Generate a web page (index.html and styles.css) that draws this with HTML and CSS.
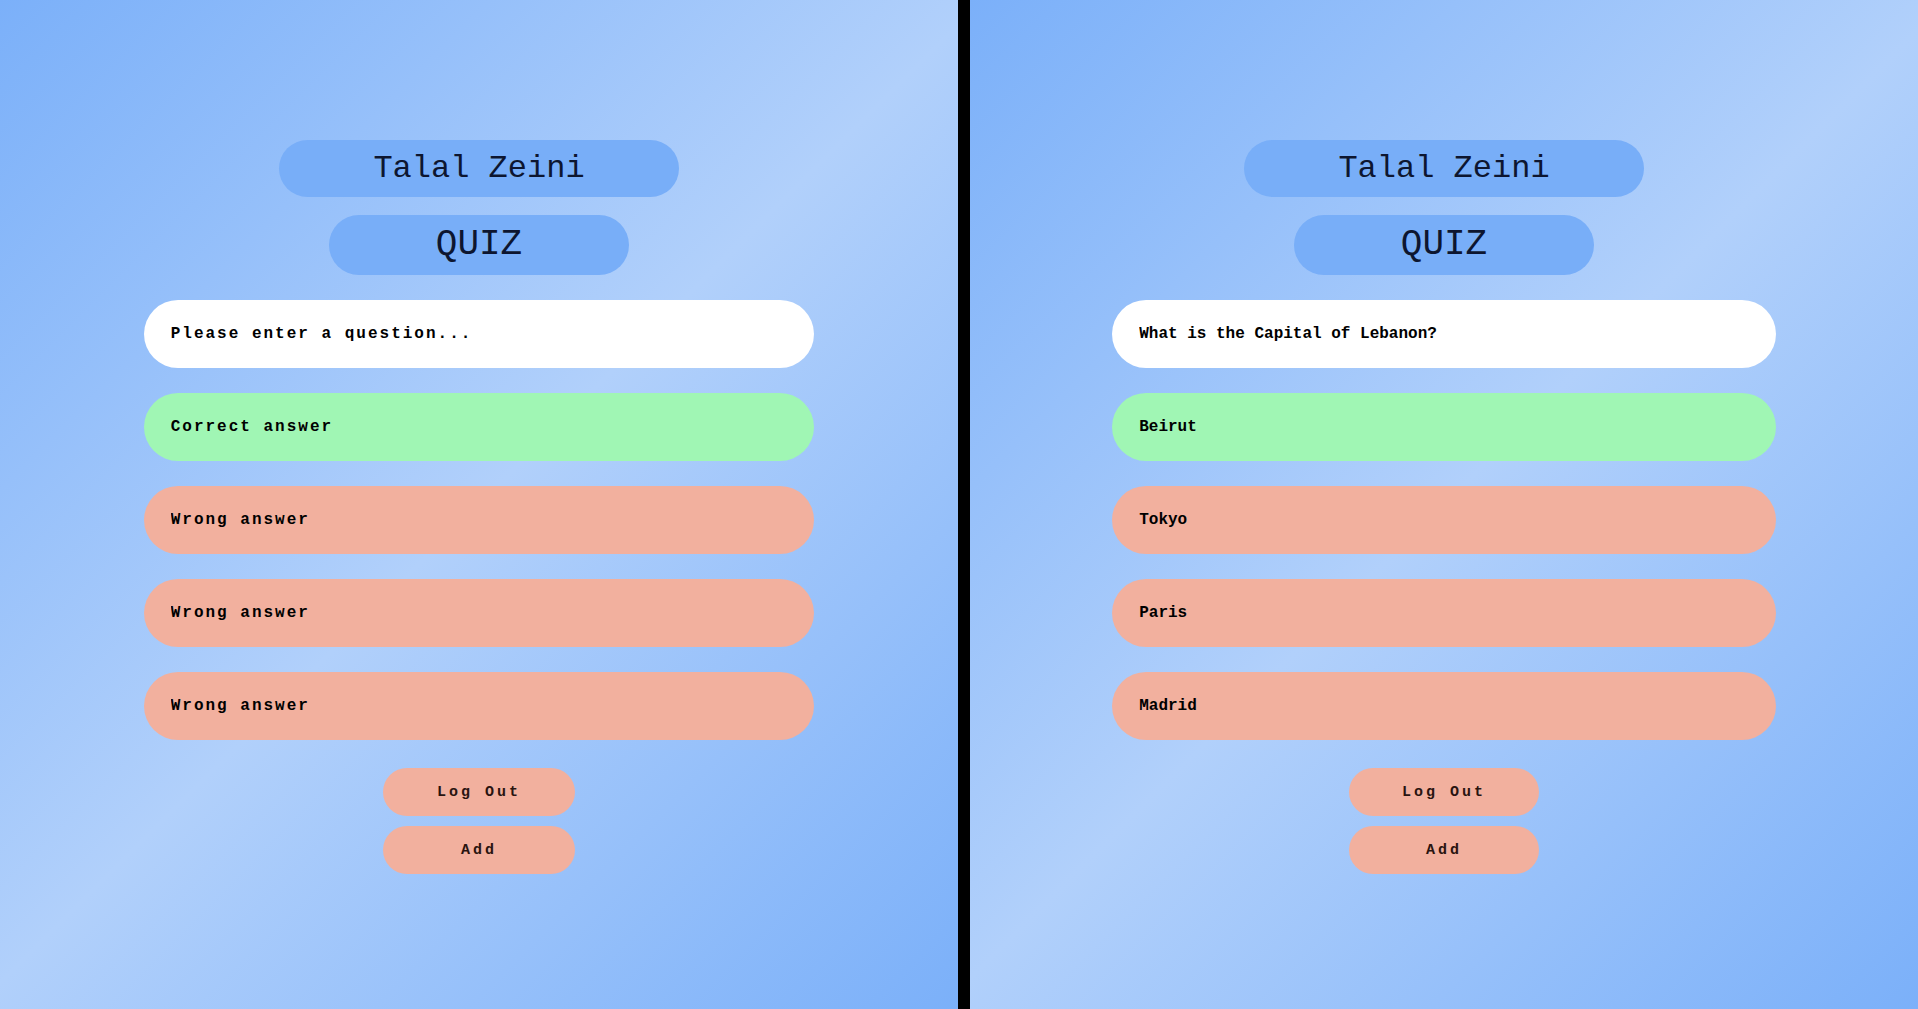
FILE: index.html
```html
<!DOCTYPE html>
<html lang="en">
<head>
<meta charset="utf-8">
<title>Quiz</title>
<link rel="stylesheet" href="styles.css">
</head>
<body>
<div class="screens">
  <section class="panel panel-left">
    <div class="title">Talal Zeini</div>
    <div class="subtitle">QUIZ</div>
    <input class="field field-question" type="text" placeholder="Please enter a question...">
    <input class="field field-correct" type="text" placeholder="Correct answer">
    <input class="field field-wrong" type="text" placeholder="Wrong answer">
    <input class="field field-wrong" type="text" placeholder="Wrong answer">
    <input class="field field-wrong field-last" type="text" placeholder="Wrong answer">
    <button class="btn">Log Out</button>
    <button class="btn">Add</button>
  </section>
  <div class="divider"></div>
  <section class="panel panel-right">
    <div class="title">Talal Zeini</div>
    <div class="subtitle">QUIZ</div>
    <input class="field field-question" type="text" value="What is the Capital of Lebanon?">
    <input class="field field-correct" type="text" value="Beirut">
    <input class="field field-wrong" type="text" value="Tokyo">
    <input class="field field-wrong" type="text" value="Paris">
    <input class="field field-wrong field-last" type="text" value="Madrid">
    <button class="btn">Log Out</button>
    <button class="btn">Add</button>
  </section>
</div>
</body>
</html>
```
FILE: styles.css
```css
* { box-sizing: border-box; }
html, body { margin: 0; padding: 0; height: 100%; }
body {
  background: #000;
  font-family: "Liberation Mono", "Courier New", monospace;
  overflow: hidden;
}
.screens {
  display: flex;
  height: 1009px;
}
.panel {
  display: flex;
  flex-direction: column;
  align-items: center;
  padding-top: 140px;
  background: linear-gradient(135deg, #7bb0f9 0%, #b1d0fb 50%, #7bb0f9 100%);
}
.panel-left { flex: 0 0 958px; }
.divider { flex: 0 0 12px; background: #000; }
.panel-right { flex: 1 1 auto; }

.title {
  width: 400px;
  height: 57px;
  border-radius: 29px;
  background: #78aef8;
  color: #0d1630;
  font-size: 32px;
  line-height: 57px;
  text-align: center;
  margin-bottom: 18px;
}
.subtitle {
  width: 300px;
  height: 60px;
  border-radius: 30px;
  background: #78aef8;
  color: #0d1630;
  font-size: 36px;
  line-height: 60px;
  text-align: center;
  margin-bottom: 25px;
}
.field {
  width: 70%;
  height: 68px;
  border: none;
  outline: none;
  border-radius: 34px;
  padding: 0 27px;
  margin: 0 0 25px 0;
  font-family: "Liberation Mono", "Courier New", monospace;
  font-size: 16px;
  font-weight: bold;
  color: #000;
}
.field::placeholder {
  color: #000;
  opacity: 1;
  letter-spacing: 2px;
}
.field-question { background: #fff; }
.field-correct { background: #a0f6b4; }
.field-wrong { background: #f2b09e; }
.field-last { margin-bottom: 28px; }

.btn {
  width: 20%;
  height: 48px;
  border: none;
  border-radius: 24px;
  background: #f2b09e;
  color: #2a1410;
  font-family: "Liberation Mono", "Courier New", monospace;
  font-size: 15px;
  font-weight: bold;
  letter-spacing: 3px;
  margin: 0 0 10px 0;
  padding: 0;
}
```
